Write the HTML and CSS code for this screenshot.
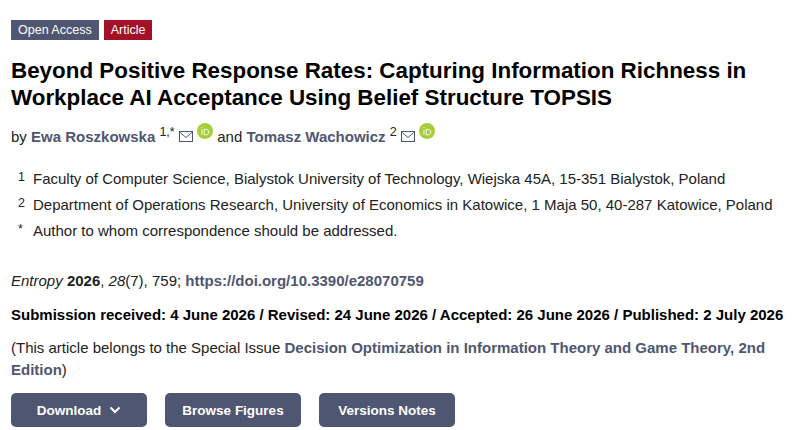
FILE: index.html
```html
<!DOCTYPE html>
<html lang="en">
<head>
  <meta charset="UTF-8">
  <title>Beyond Positive Response Rates</title>
  <link rel="stylesheet" href="styles.css">
</head>
<body>
  <div class="article">
    <div class="badges">
      <span class="badge">Open Access</span>
      <span class="badge badge-red">Article</span>
    </div>

    <h1 class="title">Beyond Positive Response Rates: Capturing Information Richness in Workplace AI Acceptance Using Belief Structure TOPSIS</h1>

    <div class="authors">
      by <a class="link" href="#">Ewa Roszkowska</a> <sup>1,*</sup>
      <svg class="mail" viewBox="0 0 14 11"><rect x="0.5" y="0.5" width="13" height="10" fill="none" stroke="#4f5671"/><path d="M0.5 1L7 6.5L13.5 1" fill="none" stroke="#4f5671"/></svg>
      <svg class="orcid" viewBox="0 0 16 16"><circle cx="8" cy="8" r="8" fill="#a6ce39"/><path d="M5 4.2v0.9M5 6.4v5.4M7.2 6.4v5.4h1.9c1.6 0 2.7-1.1 2.7-2.700S10.700 6.400 9.100 6.400z" fill="none" stroke="#fff" stroke-width="0.9"/></svg>
      and <a class="link" href="#">Tomasz Wachowicz</a> <sup>2</sup>
      <svg class="mail" viewBox="0 0 14 11"><rect x="0.5" y="0.5" width="13" height="10" fill="none" stroke="#4f5671"/><path d="M0.5 1L7 6.5L13.5 1" fill="none" stroke="#4f5671"/></svg>
      <svg class="orcid" viewBox="0 0 16 16"><circle cx="8" cy="8" r="8" fill="#a6ce39"/><path d="M5 4.2v0.9M5 6.4v5.4M7.2 6.4v5.4h1.9c1.6 0 2.7-1.1 2.7-2.700S10.700 6.400 9.100 6.400z" fill="none" stroke="#fff" stroke-width="0.9"/></svg>
    </div>

    <div class="affiliations">
      <div class="affil"><span class="affil-num">1</span><span>Faculty of Computer Science, Bialystok University of Technology, Wiejska 45A, 15-351 Bialystok, Poland</span></div>
      <div class="affil"><span class="affil-num">2</span><span>Department of Operations Research, University of Economics in Katowice, 1 Maja 50, 40-287 Katowice, Poland</span></div>
      <div class="affil"><span class="affil-num">*</span><span>Author to whom correspondence should be addressed.</span></div>
    </div>

    <p class="citation"><em>Entropy</em> <b>2026</b>, <em>28</em>(7), 759; <a class="link" href="#">https://doi.org/10.3390/e28070759</a></p>

    <p class="dates">Submission received: 4 June 2026 / Revised: 24 June 2026 / Accepted: 26 June 2026 / Published: 2 July 2026</p>

    <p class="issue">(This article belongs to the Special Issue <a class="link" href="#">Decision Optimization in Information Theory and Game Theory, 2nd Edition</a>)</p>

    <div class="buttons">
      <a class="btn btn-download" href="#">Download
        <svg class="chevron" viewBox="0 0 12 8"><path d="M1.500 1.500L6 6L10.500 1.500" fill="none" stroke="#fff" stroke-width="2"/></svg>
      </a>
      <a class="btn" href="#">Browse Figures</a>
      <a class="btn" href="#">Versions Notes</a>
    </div>
  </div>
</body>
</html>
```

FILE: styles.css
```css
body {
  margin: 0;
  background: #fff;
  color: #222;
  font-family: "Liberation Sans", Arial, sans-serif;
  font-size: 15px;
}

.article {
  padding: 20px 11px 0 11px;
}

.badges {
  display: flex;
  gap: 5px;
}

.badge {
  background: #4f5671;
  color: #fff;
  font-size: 12.5px;
  line-height: 20px;
  padding: 0 7px;
}

.badge-red {
  background: #a31129;
}

.title {
  margin: 17px 0 0 0;
  color: #000;
  font-size: 22.4px;
  line-height: 27px;
  font-weight: bold;
}

.authors {
  margin-top: 12px;
  line-height: 24px;
}

.link {
  color: #4f5671;
  font-weight: bold;
  text-decoration: none;
}

sup {
  font-size: 12.5px;
  line-height: 0;
}

.mail {
  width: 14px;
  height: 11px;
}

.orcid {
  width: 16px;
  height: 16px;
  vertical-align: 3px;
}

.affiliations {
  margin-top: 17px;
}

.affil {
  display: flex;
  line-height: 26px;
}

.affil-num {
  width: 22px;
  flex: none;
  padding-left: 7px;
  box-sizing: border-box;
  font-size: 12.5px;
  line-height: 22px;
}

.citation {
  margin: 25px 0 0 0;
  line-height: 24px;
}

.dates {
  margin: 10px 0 0 0;
  color: #000;
  font-weight: bold;
  line-height: 24px;
}

.issue {
  margin: 10px 0 0 0;
  line-height: 22px;
}

.buttons {
  display: flex;
  gap: 18px;
  margin-top: 12px;
}

.btn {
  width: 136px;
  height: 34px;
  display: flex;
  align-items: center;
  justify-content: center;
  background: #4f5671;
  color: #fff;
  border-radius: 5px;
  font-size: 13.5px;
  font-weight: bold;
  text-decoration: none;
}

.btn-download {
  gap: 8px;
}

.chevron {
  width: 12px;
  height: 8px;
}
```
